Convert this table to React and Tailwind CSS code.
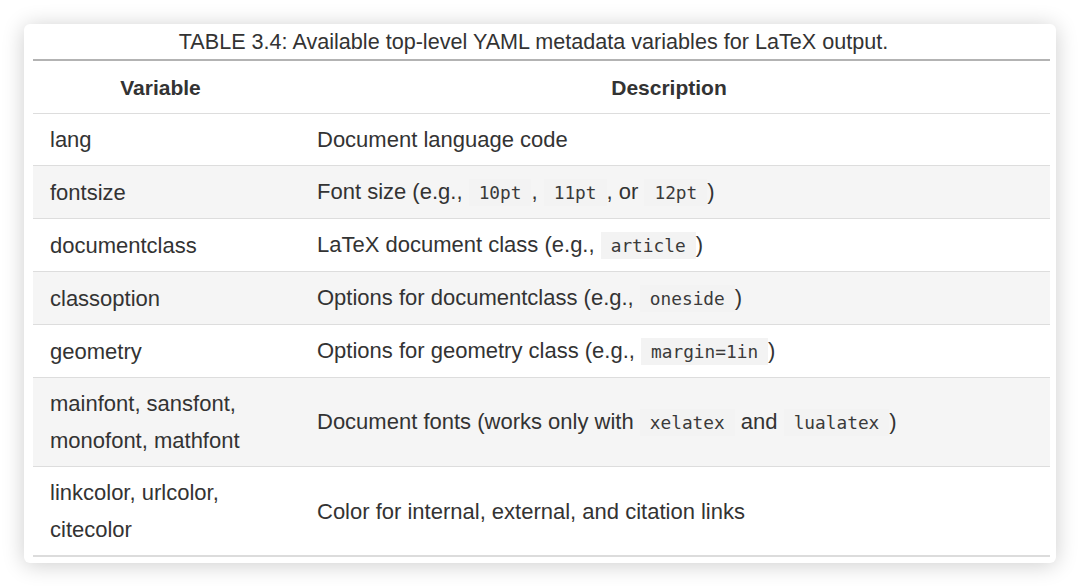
import React from 'react';

const rows = [
  { name: 'lang', desc: ['Document language code'] },
  { name: 'fontsize', desc: ['Font size (e.g., ', { code: '10pt' }, ', ', { code: '11pt' }, ', or ', { code: '12pt' }, ')'] },
  { name: 'documentclass', desc: ['LaTeX document class (e.g., ', { code: 'article' }, ')'] },
  { name: 'classoption', desc: ['Options for documentclass (e.g., ', { code: 'oneside' }, ')'] },
  { name: 'geometry', desc: ['Options for geometry class (e.g., ', { code: 'margin=1in' }, ')'] },
  { name: 'mainfont, sansfont, monofont, mathfont', desc: ['Document fonts (works only with ', { code: 'xelatex' }, ' and ', { code: 'lualatex' }, ')'] },
  { name: 'linkcolor, urlcolor, citecolor', desc: ['Color for internal, external, and citation links'] },
];

const Code = ({ children }) => (
  <code className="bg-[#f3f3f3] px-[10px] py-[3px] text-[17.8px] font-['DejaVu_Sans_Mono',monospace] text-[#3a3a3a]">
    {children}
  </code>
);

export default function App() {
  return (
    <div className="min-h-[586px] bg-white p-6 font-['Liberation_Sans',Arial,sans-serif] text-[#333]">
      <div className="rounded-md bg-white pb-[6px] pl-[9px] pr-[6px] shadow-[0_2px_22px_rgba(0,0,0,0.2)]">
        <div className="pt-[3px] pb-[2px] pr-[16px] text-center text-[21.6px] leading-[30px] text-[#333]">
          TABLE 3.4: Available top-level YAML metadata variables for LaTeX output.
        </div>
        <table className="w-full table-fixed border-collapse border-t-2 border-b-2 border-t-[#b3b3b3] border-b-[#dcdcdc] text-[22px] leading-[37px]">
          <colgroup>
            <col className="w-[267px]" />
            <col />
          </colgroup>
          <thead>
            <tr className="border-b border-[#ddd]">
              <th className="pl-[10px] pr-[22px] py-[7.5px] text-center text-[21px] font-bold">Variable</th>
              <th className="pl-[10px] pr-[22px] py-[7.5px] text-center text-[21px] font-bold">Description</th>
            </tr>
          </thead>
          <tbody>
            {rows.map((r, i) => (
              <tr key={r.name} className={`${i < rows.length - 1 ? 'border-b border-[#ddd]' : ''} ${i % 2 === 1 ? 'bg-[#f5f5f5]' : 'bg-white'}`}>
                <td className="px-[17px] py-[7px] align-middle">{r.name}</td>
                <td className="px-[17px] py-[7px] align-middle">
                  {r.desc.map((d, j) => (typeof d === 'string' ? <span key={j}>{d}</span> : <Code key={j}>{d.code}</Code>))}
                </td>
              </tr>
            ))}
          </tbody>
        </table>
      </div>
    </div>
  );
}
